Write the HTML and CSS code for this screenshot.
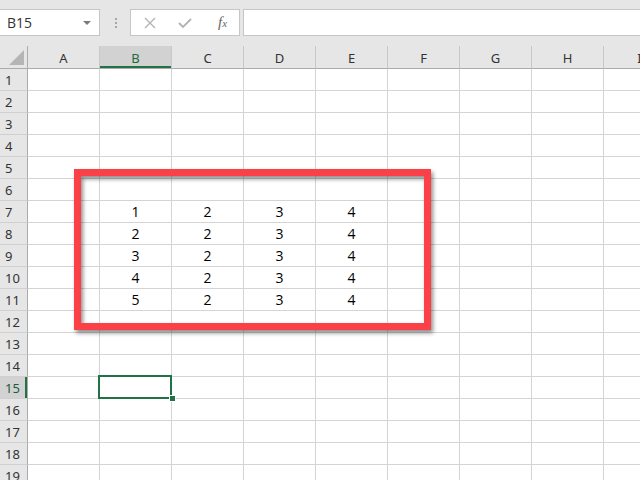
FILE: index.html
```html
<!DOCTYPE html>
<html lang="en">
<head>
  <meta charset="UTF-8" />
  <title>Book1 - Excel</title>
  <link rel="stylesheet" href="styles.css">
</head>
<body>

  <!-- Name box + formula bar -->
  <div class="toolbar">
    <div class="name-box">
      <span>B15</span>
      <span class="caret"></span>
    </div>
    <div class="grip"><i></i><i></i><i></i></div>
    <div class="fx-buttons">
      <svg class="btn-icon" width="12" height="12" viewBox="0 0 12 12">
        <path d="M1 1 L11 11 M11 1 L1 11" stroke="#b3b3b3" stroke-width="1.4" fill="none"/>
      </svg>
      <svg class="btn-icon" width="14" height="12" viewBox="0 0 14 12">
        <path d="M1 6 L5 10 L13 2" stroke="#b3b3b3" stroke-width="1.8" fill="none"/>
      </svg>
      <span class="fx">f<small>x</small></span>
    </div>
    <div class="formula-input"></div>
  </div>

  <!-- Sheet -->
  <div class="sheet">
    <div class="corner"><span></span></div>
    <div class="col-head">A</div>
    <div class="col-head active">B</div>
    <div class="col-head">C</div>
    <div class="col-head">D</div>
    <div class="col-head">E</div>
    <div class="col-head">F</div>
    <div class="col-head">G</div>
    <div class="col-head">H</div>
    <div class="col-head">I</div>

    <div class="row-head">1</div><div class="cell"></div><div class="cell"></div><div class="cell"></div><div class="cell"></div><div class="cell"></div><div class="cell"></div><div class="cell"></div><div class="cell"></div><div class="cell"></div>
    <div class="row-head">2</div><div class="cell"></div><div class="cell"></div><div class="cell"></div><div class="cell"></div><div class="cell"></div><div class="cell"></div><div class="cell"></div><div class="cell"></div><div class="cell"></div>
    <div class="row-head">3</div><div class="cell"></div><div class="cell"></div><div class="cell"></div><div class="cell"></div><div class="cell"></div><div class="cell"></div><div class="cell"></div><div class="cell"></div><div class="cell"></div>
    <div class="row-head">4</div><div class="cell"></div><div class="cell"></div><div class="cell"></div><div class="cell"></div><div class="cell"></div><div class="cell"></div><div class="cell"></div><div class="cell"></div><div class="cell"></div>
    <div class="row-head">5</div><div class="cell"></div><div class="cell"></div><div class="cell"></div><div class="cell"></div><div class="cell"></div><div class="cell"></div><div class="cell"></div><div class="cell"></div><div class="cell"></div>
    <div class="row-head">6</div><div class="cell"></div><div class="cell"></div><div class="cell"></div><div class="cell"></div><div class="cell"></div><div class="cell"></div><div class="cell"></div><div class="cell"></div><div class="cell"></div>
    <div class="row-head">7</div><div class="cell"></div><div class="cell">1</div><div class="cell">2</div><div class="cell">3</div><div class="cell">4</div><div class="cell"></div><div class="cell"></div><div class="cell"></div><div class="cell"></div>
    <div class="row-head">8</div><div class="cell"></div><div class="cell">2</div><div class="cell">2</div><div class="cell">3</div><div class="cell">4</div><div class="cell"></div><div class="cell"></div><div class="cell"></div><div class="cell"></div>
    <div class="row-head">9</div><div class="cell"></div><div class="cell">3</div><div class="cell">2</div><div class="cell">3</div><div class="cell">4</div><div class="cell"></div><div class="cell"></div><div class="cell"></div><div class="cell"></div>
    <div class="row-head">10</div><div class="cell"></div><div class="cell">4</div><div class="cell">2</div><div class="cell">3</div><div class="cell">4</div><div class="cell"></div><div class="cell"></div><div class="cell"></div><div class="cell"></div>
    <div class="row-head">11</div><div class="cell"></div><div class="cell">5</div><div class="cell">2</div><div class="cell">3</div><div class="cell">4</div><div class="cell"></div><div class="cell"></div><div class="cell"></div><div class="cell"></div>
    <div class="row-head">12</div><div class="cell"></div><div class="cell"></div><div class="cell"></div><div class="cell"></div><div class="cell"></div><div class="cell"></div><div class="cell"></div><div class="cell"></div><div class="cell"></div>
    <div class="row-head">13</div><div class="cell"></div><div class="cell"></div><div class="cell"></div><div class="cell"></div><div class="cell"></div><div class="cell"></div><div class="cell"></div><div class="cell"></div><div class="cell"></div>
    <div class="row-head">14</div><div class="cell"></div><div class="cell"></div><div class="cell"></div><div class="cell"></div><div class="cell"></div><div class="cell"></div><div class="cell"></div><div class="cell"></div><div class="cell"></div>
    <div class="row-head active">15</div><div class="cell"></div><div class="cell selected"><span class="fill-handle"></span></div><div class="cell"></div><div class="cell"></div><div class="cell"></div><div class="cell"></div><div class="cell"></div><div class="cell"></div><div class="cell"></div>
    <div class="row-head">16</div><div class="cell"></div><div class="cell"></div><div class="cell"></div><div class="cell"></div><div class="cell"></div><div class="cell"></div><div class="cell"></div><div class="cell"></div><div class="cell"></div>
    <div class="row-head">17</div><div class="cell"></div><div class="cell"></div><div class="cell"></div><div class="cell"></div><div class="cell"></div><div class="cell"></div><div class="cell"></div><div class="cell"></div><div class="cell"></div>
    <div class="row-head">18</div><div class="cell"></div><div class="cell"></div><div class="cell"></div><div class="cell"></div><div class="cell"></div><div class="cell"></div><div class="cell"></div><div class="cell"></div><div class="cell"></div>
    <div class="row-head">19</div><div class="cell"></div><div class="cell"></div><div class="cell"></div><div class="cell"></div><div class="cell"></div><div class="cell"></div><div class="cell"></div><div class="cell"></div><div class="cell"></div>
  </div>

  <!-- Red highlight drawn over the data -->
  <div class="callout"></div>

</body>
</html>
```

FILE: styles.css
```css
*, *::before, *::after { box-sizing: border-box; }
html, body {
  margin: 0;
  width: 640px;
  height: 480px;
  overflow: hidden;
}
body {
  position: relative;
  font-family: 'Open Sans', 'Liberation Sans', sans-serif;
  background: #fff;
  color: #000;
}

/* Formula bar */
.toolbar {
  display: flex;
  align-items: flex-start;
  height: 46px;
  padding-top: 9px;
  background: #e6e6e6;
}

.name-box {
  display: flex;
  align-items: center;
  justify-content: space-between;
  width: 101px;
  height: 27px;
  margin-left: -1px;
  padding: 0 8px 0 7px;
  background: #fff;
  border: 1px solid #c6c6c6;
  font-size: 14px;
  color: #333;
}

.caret {
  width: 0;
  height: 0;
  border-left: 4px solid transparent;
  border-right: 4px solid transparent;
  border-top: 4px solid #7a7a7a;
}

.grip {
  display: flex;
  flex-direction: column;
  gap: 2px;
  width: 30px;
  padding: 9px 0 0 15px;
}

.grip i {
  width: 2px;
  height: 2px;
  background: #a6a6a6;
}

.fx-buttons {
  display: flex;
  align-items: center;
  width: 110px;
  height: 27px;
  padding-left: 13px;
  gap: 22px;
  background: #fff;
  border: 1px solid #c6c6c6;
}

.fx {
  font-family: 'Liberation Serif', serif;
  font-style: italic;
  font-size: 15px;
  color: #666;
  margin-left: 4px;
}

.fx small {
  font-size: 11px;
}

.formula-input {
  flex: 1;
  height: 27px;
  margin-left: 3px;
  margin-right: -2px;
  background: #fff;
  border: 1px solid #c6c6c6;
}

/* Grid */
.sheet {
  display: grid;
  grid-template-columns: 28px repeat(9, 72px);
  grid-template-rows: 23px;
  grid-auto-rows: 22px;
  width: 676px;
}

.corner,
.col-head,
.row-head {
  background: #e6e6e6;
  font-family: 'Noto Sans', sans-serif;
  font-size: 13px;
  color: #333;
}

.corner {
  display: flex;
  align-items: flex-end;
  justify-content: flex-end;
  padding: 0 3px 3px 0;
  border-right: 1px solid #ababab;
  border-bottom: 1px solid #ababab;
}

.corner span {
  width: 15px;
  height: 15px;
  background: #b5b5b5;
  clip-path: polygon(100% 0, 100% 100%, 0 100%);
}

.col-head {
  display: flex;
  align-items: center;
  justify-content: center;
  padding-top: 1px;
  border-right: 1px solid #c8c8c8;
  border-bottom: 1px solid #ababab;
}

.col-head.active {
  background: #d2d2d2;
  color: #1d6b41;
  box-shadow: inset 0 -2px #217346;
}

.row-head {
  display: flex;
  align-items: center;
  padding-left: 5px;
  border-right: 1px solid #ababab;
  border-bottom: 1px solid #d0d0d0;
}

.row-head.active {
  background: #d2d2d2;
  color: #1d5c3b;
  box-shadow: inset -2px 0 #217346;
}

.cell {
  display: flex;
  align-items: center;
  justify-content: center;
  font-size: 14px;
  border-right: 1px solid #d4d4d4;
  border-bottom: 1px solid #d4d4d4;
}

.cell.selected {
  position: relative;
}

.cell.selected::before {
  content: "";
  position: absolute;
  left: -2px;
  top: -2px;
  width: 74px;
  height: 24px;
  border: 2px solid #217346;
}

.fill-handle {
  position: absolute;
  left: 70px;
  top: 19px;
  width: 5px;
  height: 5px;
  background: #217346;
  outline: 1px solid #fff;
}

/* Red annotation box */
.callout {
  position: absolute;
  left: 74px;
  top: 169px;
  width: 357px;
  height: 161px;
  border: 7px solid #fc4048;
  filter: drop-shadow(2px 3px 2px rgba(0,0,0,0.45));
}
```
